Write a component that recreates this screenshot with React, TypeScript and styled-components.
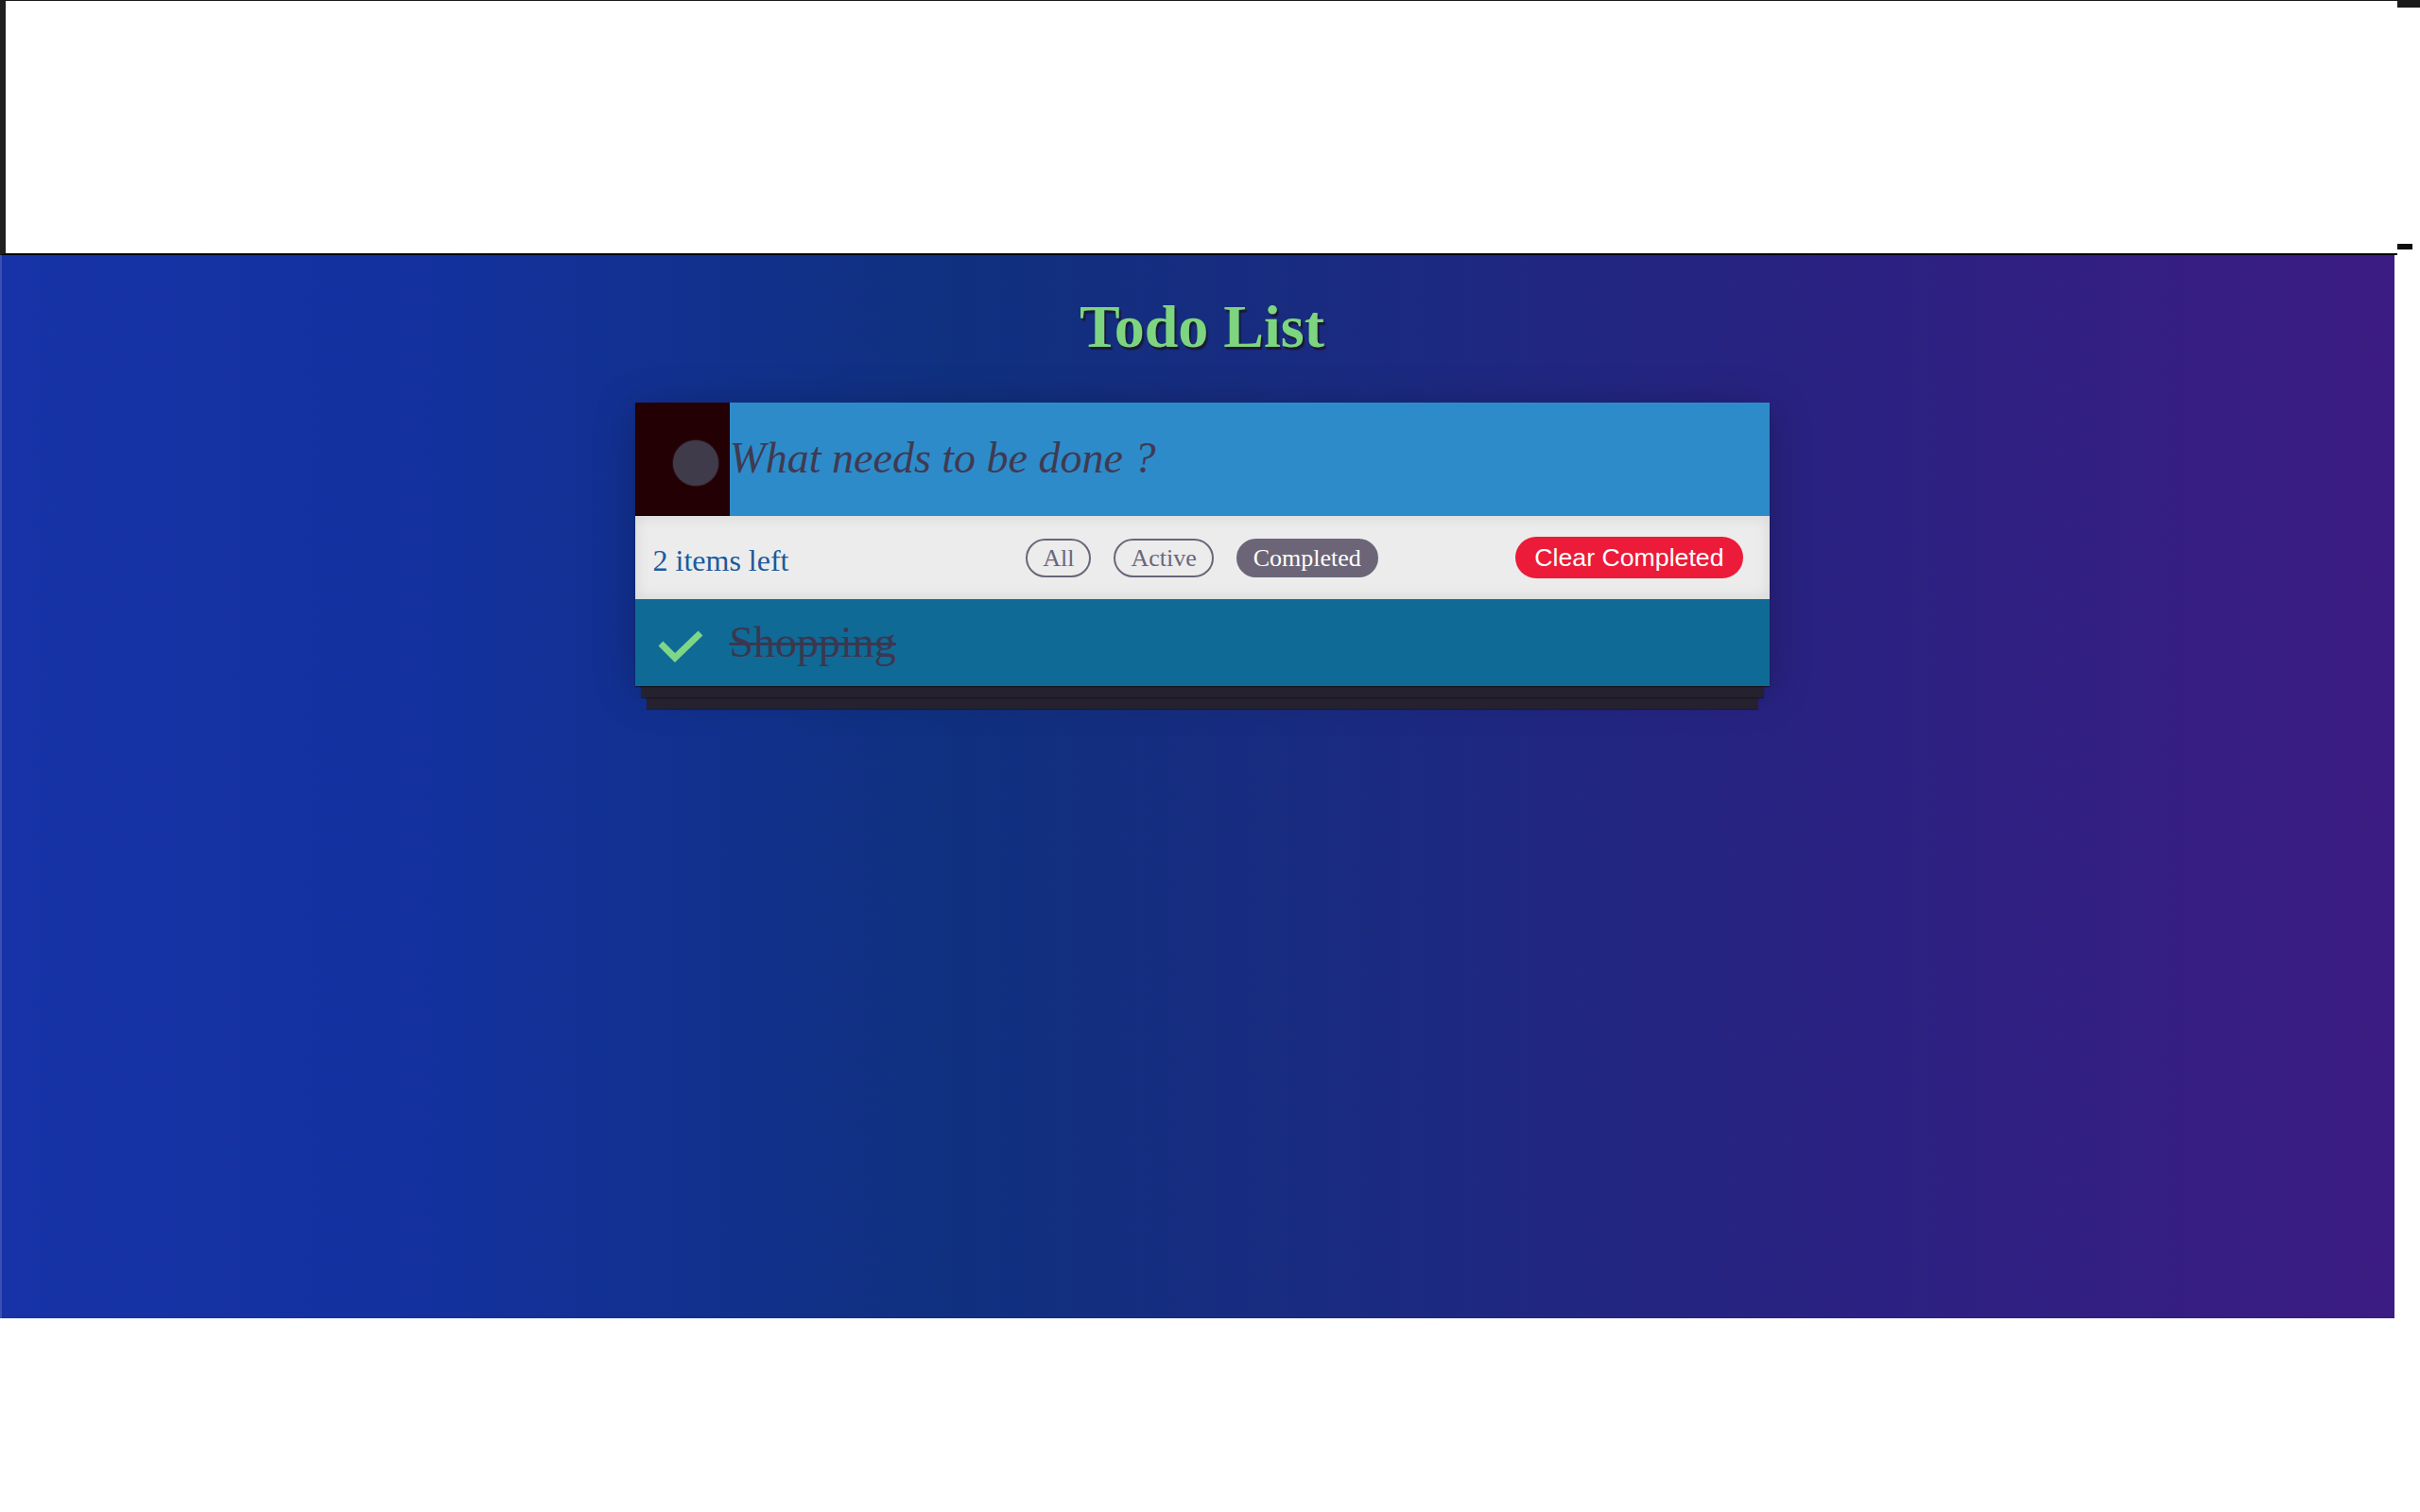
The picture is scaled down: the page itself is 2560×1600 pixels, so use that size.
import React from "react";
import styled, { createGlobalStyle } from "styled-components";

const Global = createGlobalStyle`
  html, body { margin: 0; padding: 0; background: #ffffff; }
  body { font-family: "Liberation Serif", "Times New Roman", serif; }
  * { box-sizing: border-box; }
`;

const TopBar = styled.div`
  display: flex;
  height: 270px;
`;

const Frame = styled.div`
  width: 2536px;
  height: 270px;
  background: #ffffff;
  border-top: 1px solid #1b1b1b;
  border-left: 6px solid #202020;
  border-bottom: 2px solid #060606;
`;

const Side = styled.div`
  width: 24px;
  display: flex;
  flex-direction: column;
  justify-content: space-between;
`;

const CornerMark = styled.div`
  height: 8px;
  background: #1a1a1a;
`;

const Dash = styled.div`
  width: 16px;
  height: 6px;
  margin-bottom: 6px;
  background: #0c0c0c;
  border-left: 3px solid #111;
`;

const Stage = styled.section`
  width: 2533px;
  height: 1125px;
  border-left: 2px solid #3d50b6;
  background: linear-gradient(
    to right,
    #1733a7 0%,
    #1431a0 16%,
    #10307f 40%,
    #1b2a80 58%,
    #2b2182 78%,
    #3c1c82 100%
  );
  display: flex;
  flex-direction: column;
  align-items: center;
  padding: 44px 0 0 8px;
`;

const Title = styled.h1`
  margin: 0;
  font-family: "Liberation Serif", "Times New Roman", serif;
  font-weight: 700;
  font-size: 64px;
  line-height: 64px;
  color: #7dd580;
  text-shadow: 2px 3px 1px #1b1a34;
`;

const Card = styled.div`
  margin-top: 48px;
  width: 1200px;
  display: flex;
  flex-direction: column;
  box-shadow:
    0 1px 1px rgba(0, 0, 0, 0.5),
    0 18px 0 -6px #25212e,
    0 19px 1px -6px rgba(0, 0, 0, 0.35),
    0 36px 0 -12px #25212e,
    0 37px 1px -12px rgba(0, 0, 0, 0.35),
    0 6px 40px rgba(0, 0, 0, 0.25);
`;

const InputRow = styled.div`
  display: flex;
  height: 120px;
  background: #2e8bc9;
`;

const ToggleBox = styled.div`
  width: 100px;
  flex: none;
  background: #230003;
  padding: 40px 0 0 40px;
`;

const ToggleDot = styled.div`
  width: 48px;
  height: 48px;
  border-radius: 50%;
  background: #3f3b4b;
  box-shadow: 0 0 2px rgba(80, 76, 96, 0.8);
`;

const NewTodo = styled.input`
  flex: 1;
  height: 100%;
  border: none;
  outline: none;
  background: transparent;
  padding: 0 0 3px 0;
  margin: 0;
  font-family: "Liberation Serif", "Times New Roman", serif;
  font-size: 46px;
  font-style: italic;
  color: #3f3a52;
  &::placeholder {
    color: #3f3a52;
    opacity: 1;
  }
`;

const Footer = styled.div`
  display: grid;
  grid-template-columns: 1fr auto 1fr;
  align-items: center;
  height: 88px;
  padding: 0 28px;
  background: #ececec;
  box-shadow: inset 0 0 16px rgba(0, 0, 0, 0.1);
`;

const ItemsLeft = styled.span`
  font-size: 32px;
  color: #1c5a9c;
  margin: 6px 0 0 -9px;
`;

const Filters = styled.div`
  display: flex;
  gap: 24px;
`;

const FilterButton = styled.button<{ $active?: boolean }>`
  height: 41px;
  padding: 0 16px;
  border-radius: 21px;
  border: 2px solid #6b6678;
  background: ${(p) => (p.$active ? "#6b6577" : "transparent")};
  color: ${(p) => (p.$active ? "#ffffff" : "#6b6678")};
  font-family: "Liberation Serif", "Times New Roman", serif;
  font-size: 26px;
  line-height: 37px;
  cursor: pointer;
`;

const ClearButton = styled.button`
  justify-self: end;
  height: 44px;
  padding: 0 20px;
  border: none;
  border-radius: 22px;
  background: #ec1b39;
  color: #ffffff;
  font-family: "Liberation Sans", Arial, sans-serif;
  font-size: 26.7px;
  line-height: 44px;
  cursor: pointer;
`;

const ItemRow = styled.div`
  display: flex;
  align-items: center;
  height: 92px;
  background: #106a96;
`;

const CheckCell = styled.div`
  width: 100px;
  flex: none;
  display: flex;
  padding: 8px 0 0 24px;
`;

const ItemText = styled.span<{ $done?: boolean }>`
  font-family: "Liberation Serif", "Times New Roman", serif;
  font-size: 46px;
  color: #3b3750;
  text-decoration: ${(p) => (p.$done ? "line-through" : "none")};
  text-decoration-color: #3b3750;
  text-decoration-thickness: 3px;
  margin-top: -2px;
`;

const CheckIcon = () => (
  <svg width="48" height="34" viewBox="0 0 48 34" aria-hidden="true">
    <polyline
      points="3,14 18,29 45,3"
      fill="none"
      stroke="#7ed687"
      strokeWidth="7"
      strokeLinejoin="miter"
    />
  </svg>
);

export default function App() {
  return (
    <>
      <Global />
      <TopBar>
        <Frame />
        <Side>
          <CornerMark />
          <Dash />
        </Side>
      </TopBar>
      <Stage>
        <Title>Todo List</Title>
        <Card>
          <InputRow>
            <ToggleBox>
              <ToggleDot />
            </ToggleBox>
            <NewTodo placeholder="What needs to be done ?" />
          </InputRow>
          <Footer>
            <ItemsLeft>2 items left</ItemsLeft>
            <Filters>
              <FilterButton>All</FilterButton>
              <FilterButton>Active</FilterButton>
              <FilterButton $active>Completed</FilterButton>
            </Filters>
            <ClearButton>Clear Completed</ClearButton>
          </Footer>
          <ItemRow>
            <CheckCell>
              <CheckIcon />
            </CheckCell>
            <ItemText $done>Shopping</ItemText>
          </ItemRow>
        </Card>
      </Stage>
    </>
  );
}
